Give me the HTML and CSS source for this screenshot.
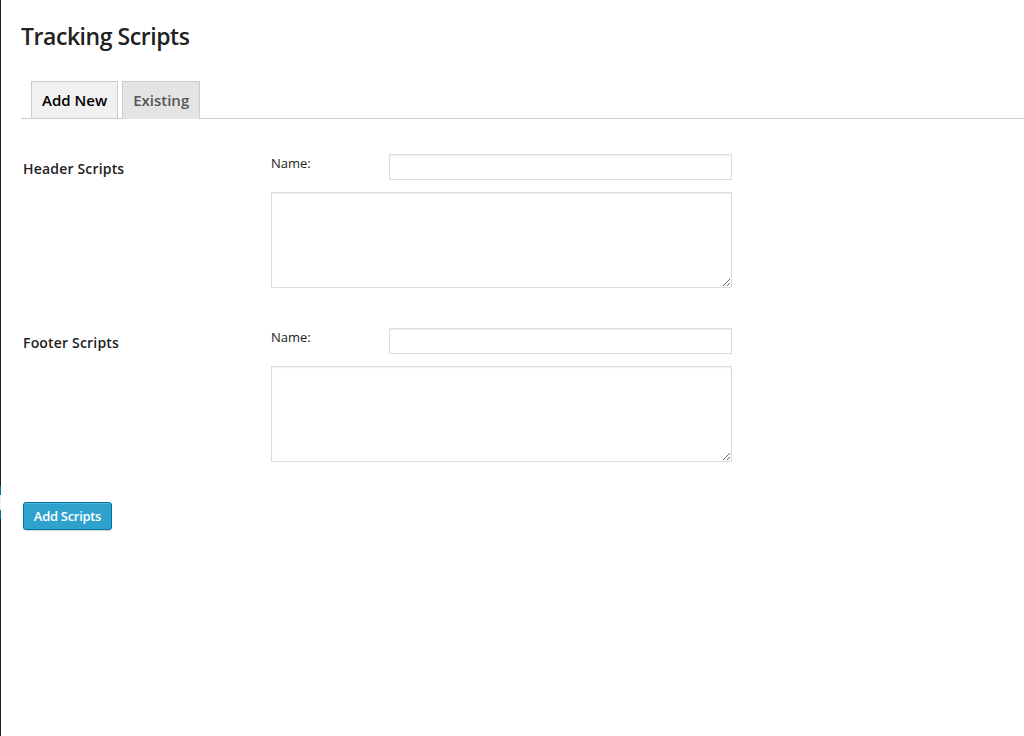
FILE: index.html
```html
<!DOCTYPE html>
<html>
<head>
<meta charset="utf-8">
<link rel="stylesheet" href="styles.css">
</head>
<body>
<div class="page">
  <div class="edge">
    <div class="edge-dark edge-top"></div>
    <div class="edge-blue"></div>
    <div class="edge-light"></div>
    <div class="edge-blue"></div>
    <div class="edge-dark edge-fill"></div>
  </div>
  <div class="wrap">
    <h1 class="title">Tracking Scripts</h1>
    <div class="tabs">
      <a class="tab tab-active">Add New</a>
      <a class="tab">Existing</a>
    </div>
    <form class="form">
      <div class="section">
        <div class="section-label">Header Scripts</div>
        <div class="section-fields">
          <div class="name-row">
            <label class="name-label">Name:</label>
            <input class="name-input" type="text">
          </div>
          <textarea class="code"></textarea>
        </div>
      </div>
      <div class="section">
        <div class="section-label">Footer Scripts</div>
        <div class="section-fields">
          <div class="name-row">
            <label class="name-label">Name:</label>
            <input class="name-input" type="text">
          </div>
          <textarea class="code"></textarea>
        </div>
      </div>
      <div class="actions">
        <button type="button" class="button">Add Scripts</button>
      </div>
    </form>
  </div>
</div>
</body>
</html>
```

FILE: styles.css
```css
html, body {
  margin: 0;
  padding: 0;
  background: #fff;
  height: 100%;
}
body {
  font-family: "Open Sans", "Liberation Sans", sans-serif;
  color: #444;
}
.page {
  display: flex;
  min-height: 736px;
}
.edge {
  width: 1px;
  display: flex;
  flex-direction: column;
  flex: none;
}
.edge-dark { background: #222; }
.edge-top { height: 486px; }
.edge-blue { height: 9px; background: #0074a2; }
.edge-light { height: 15px; background: #f1f1f1; }
.edge-fill { flex: 1; }
.wrap {
  flex: 1;
  padding: 22px 0 0 20px;
}
.title {
  margin: 0;
  font-size: 23px;
  line-height: 29px;
  font-weight: 600;
  color: #222;
  letter-spacing: -0.45px;
}
.tabs {
  margin-top: 30px;
  padding-left: 10px;
  display: flex;
  gap: 4px;
  border-bottom: 1px solid #ccc;
}
.tab {
  display: block;
  padding: 6px 10px 7px;
  font-size: 15px;
  line-height: 24px;
  font-weight: 600;
  border: 1px solid #ccc;
  border-bottom: none;
  background: #e4e4e4;
  color: #555;
  margin-bottom: -1px;
}
.tab-active {
  background: #f1f1f1;
  color: #000;
  border-bottom: 1px solid #ccc;
  padding-bottom: 6px;
}
.form {
  padding: 35px 0 0 2px;
}
.section {
  display: flex;
  margin-bottom: 40px;
}
.section-label {
  width: 248px;
  padding-top: 5px;
  font-size: 14px;
  line-height: 20px;
  font-weight: 600;
  color: #222;
  letter-spacing: 0.18px;
}
.section-fields {
  display: flex;
  flex-direction: column;
  gap: 12px;
}
.name-row {
  display: flex;
}
.name-label {
  width: 118px;
  font-size: 13px;
  line-height: 18px;
  color: #222;
}
.name-input {
  box-sizing: border-box;
  width: 343px;
  height: 26px;
  margin: 0;
  border: 1px solid #ddd;
  box-shadow: inset 0 1px 2px rgba(0,0,0,.07);
  background: #fff;
  padding: 3px 5px;
  font-family: inherit;
  font-size: 14px;
  outline: none;
}
.code {
  box-sizing: border-box;
  width: 461px;
  height: 96px;
  margin: 0;
  border: 1px solid #ddd;
  box-shadow: inset 0 1px 2px rgba(0,0,0,.07);
  background: #fff;
  padding: 2px 6px;
  font-family: inherit;
  font-size: 14px;
  display: block;
  outline: none;
}
.actions {
  display: flex;
}
.button {
  box-sizing: border-box;
  height: 28px;
  width: 89px;
  padding: 0 5px 1px;
  font-family: inherit;
  font-size: 13px;
  line-height: 26px;
  font-weight: 600;
  color: #fff;
  background: #2ea2cc;
  border: 1px solid #0074a2;
  border-radius: 3px;
  box-shadow: inset 0 1px 0 rgba(120,200,230,.5), 0 1px 0 rgba(0,0,0,.15);
  cursor: pointer;
  white-space: nowrap;
  letter-spacing: -0.3px;
}
```
